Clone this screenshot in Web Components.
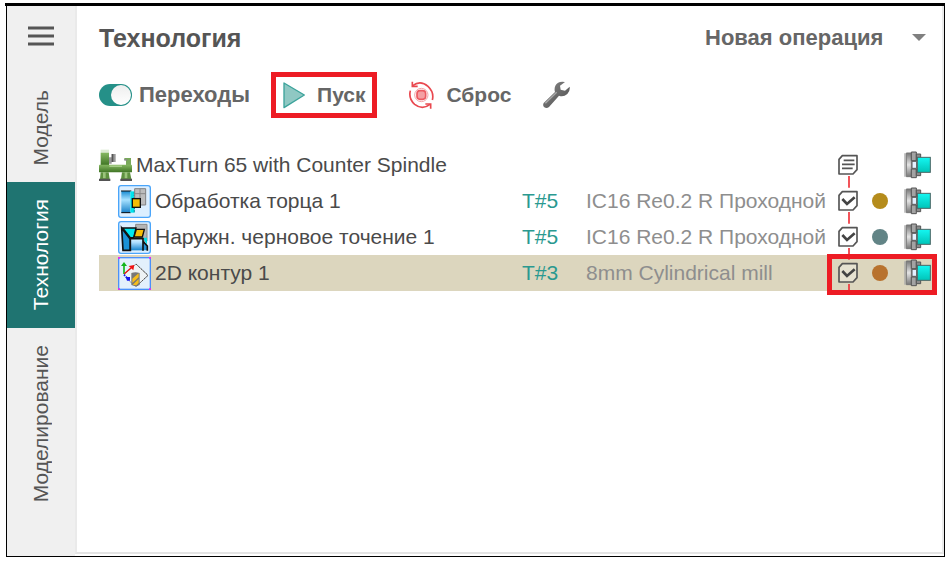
<!DOCTYPE html>
<html lang="ru">
<head>
<meta charset="utf-8">
<title>Технология</title>
<style>
  body {
    margin: 0;
    background: #fff;
    color: #4a4a4a;
    font-family: "Liberation Sans", Arial, sans-serif;
    font-size: 21px;
  }
</style>
</head>
<body>
<cam-app>
  <cam-sidebar slot="sidebar">
    <cam-tab>Модель</cam-tab>
    <cam-tab active>Технология</cam-tab>
    <cam-tab>Моделирование</cam-tab>
  </cam-sidebar>
  <cam-header>Технология</cam-header>
  <cam-toolbar></cam-toolbar>
  <cam-operations></cam-operations>
</cam-app>

<script>
const ICONS = {
  machine: `
    <svg width="33" height="36" viewBox="28 21 99 108" aria-hidden="true">
      <defs><linearGradient id="g" x1="0" y1="0" x2="0" y2="1">
        <stop offset="0" stop-color="#86b862"/><stop offset="1" stop-color="#3f7424"/>
      </linearGradient></defs>
      <rect x="33" y="29" width="25" height="9" fill="#dcebd2"/>
      <rect x="33" y="38" width="25" height="38" fill="url(#g)"/>
      <path d="M58 52h8V42h12v24H66v5h-8z" fill="#999"/>
      <path d="M66 42h5v24h-5z" fill="#555"/>
      <path d="M104 54h20v25h-15V60h-5z" fill="#79a95a"/>
      <path d="M104 57h8v5h-8z" fill="#888"/>
      <rect x="28" y="74" width="99" height="23" rx="2" fill="url(#g)"/>
      <path d="M59 76h38v5H59z" fill="#a5cc86"/>
      <path d="M33 97h24l3 20H31zM97 97h24l4 20H94z" fill="#5e913f"/>
      <path d="M40 97h8v18h-8zM105 97h8v18h-8z" fill="#9bc47c"/>
      <path d="M28 116h34v7H28zM92 116h35v7H92z" fill="#545454"/>
    </svg>`,
  facing: `
    <svg width="33" height="33" viewBox="83 133 99 99" aria-hidden="true">
      <defs><linearGradient id="f" x1="0" y1="0" x2="0" y2="1">
        <stop offset="0" stop-color="#168ad2"/><stop offset=".4" stop-color="#a8e2ff"/><stop offset="1" stop-color="#147ec8"/>
      </linearGradient></defs>
      <rect x="85" y="135" width="95" height="95" rx="7" fill="#dcefff" stroke="#4aa5fa" stroke-width="4"/>
      <rect x="93" y="151" width="27" height="66" fill="url(#f)"/>
      <path d="M92 151h31M93 216h28" stroke="#111" stroke-width="3"/>
      <path d="M120 152h12v64h-12z" fill="#00e5ee"/>
      <path d="M132 155v18M132 202v15" stroke="#008e98" stroke-width="4" stroke-dasharray="4 3"/>
      <path d="M133 144h33v49h-16v-20h-17z" fill="#bdbdbd" stroke="#828282" stroke-width="3"/>
      <path d="M149 144v15h17M133 159h16v14" fill="none" stroke="#888" stroke-width="3"/>
      <rect x="126" y="174" width="24" height="26" fill="#f4bd06" stroke="#111" stroke-width="4"/>
    </svg>`,
  roughing: `
    <svg width="33" height="33" viewBox="83 243 99 99" aria-hidden="true">
      <defs><linearGradient id="r" x1="0" y1="0" x2="0" y2="1">
        <stop offset="0" stop-color="#d8f2ff"/><stop offset=".3" stop-color="#aedfff"/><stop offset="1" stop-color="#1784cd"/>
      </linearGradient></defs>
      <rect x="85" y="245" width="95" height="95" rx="7" fill="#dcefff" stroke="#4aa5fa" stroke-width="4"/>
      <path d="M136 253h34v50h-16v-10h-18z" fill="#b5b5b5" stroke="#898989" stroke-width="3"/>
      <path d="M94 264l26 34v33H98z" fill="#1b92d6" stroke="#111" stroke-width="5"/>
      <path d="M97 264h40l-7 29h-10z" fill="#00e8f0" stroke="#111" stroke-width="4"/>
      <path d="M157 293h13v21z" fill="#00dce6"/>
      <path d="M120 297h38v34h-38z" fill="url(#r)"/>
      <path d="M158 304l13 14v13h-13z" fill="#2593d8"/>
      <path d="M120 332v-36h38v36M158 304l13 14v14" fill="none" stroke="#111" stroke-width="5"/>
      <path d="M138 268h24l-6 23h-25z" fill="#f4bd06" stroke="#111" stroke-width="4"/>
    </svg>`,
  contour: `
    <svg width="33" height="33" viewBox="83 351 99 99" aria-hidden="true">
      <rect x="85" y="353" width="95" height="95" fill="#e3f0fc" stroke="#4a90fa" stroke-width="4"/>
      <path d="M83 351h6v5h-6zM176 351h6v5h-6zM83 445h6v5h-6zM176 445h6v5h-6z" fill="#e52af0"/>
      <path d="M101 403l36-31 36 34-36 34-20-17" fill="#eef2f4" stroke="#999" stroke-width="3"/>
      <path d="M137 372l36 34-36 34" fill="none" stroke="#555" stroke-width="3" stroke-dasharray="6 4"/>
      <path d="M101 402v-28" stroke="#12b51c" stroke-width="5"/>
      <path d="M92 378l9-12 9 12z" fill="#12b51c"/>
      <path d="M102 401l20-17" stroke="#f01010" stroke-width="4"/>
      <path d="M115 378l17-3-3 16z" fill="#f01010"/>
      <path d="M101 404l16 17" stroke="#1515ee" stroke-width="5" stroke-dasharray="5 3"/>
      <path d="M106 411h13v11h-9z" fill="#1515ee"/>
      <path d="M123 399q12-5 25 0v36q-12 7-25 0z" fill="#777"/>
      <path d="M126 416l19-16v12l-19 17zM127 434l18-17v12l-7 7z" fill="#f5bd1b"/>
    </svg>`,
  chuck: `
    <svg width="27" height="36" viewBox="252 21 81 108" aria-hidden="true">
      <defs>
        <linearGradient id="m" x1="0" y1="0" x2="0" y2="1">
          <stop offset="0" stop-color="#777"/><stop offset=".5" stop-color="#e4e4e4"/><stop offset="1" stop-color="#777"/>
        </linearGradient>
        <linearGradient id="c" x1="0" y1="0" x2="0" y2="1">
          <stop offset="0" stop-color="#14f7f2"/><stop offset="1" stop-color="#00c4b8"/>
        </linearGradient>
      </defs>
      <path d="M255 40v70" stroke="#aaa" stroke-width="4"/>
      <path d="M259 39h15v71h-15z" fill="url(#m)" stroke="#777" stroke-width="3"/>
      <path d="M274 36h15v26h-15zM274 87h15v26h-15z" fill="#a3a3a3" stroke="#555" stroke-width="3"/>
      <path d="M276 64h14v21h-14z" fill="#e4f1ff" stroke="#555" stroke-width="3"/>
      <path d="M289 42h13v20h-13zM289 87h13v20h-13z" fill="#8c8c8c" stroke="#555" stroke-width="3"/>
      <rect x="292" y="52" width="39" height="45" fill="url(#c)" stroke="#4b6665" stroke-width="3"/>
    </svg>`,
  play: `
    <svg width="22" height="28" viewBox="582 34 66 84" aria-hidden="true">
      <path d="M585 40l61 36-61 38z" fill="#8fc8c3" stroke="#3ca39b" stroke-width="4" stroke-linejoin="round"/>
    </svg>`,
  reset: `
    <svg width="25" height="28" viewBox="61 34 75 84" aria-hidden="true">
      <rect x="85" y="63" width="26" height="26" rx="9" fill="#f4a0a3" stroke="#ec5a60" stroke-width="5"/>
      <circle cx="98" cy="76" r="20" fill="none" stroke="#f3a5a8" stroke-width="3"/>
      <g fill="none" stroke="#e9484f" stroke-width="5">
        <path d="M72 48Q95 30 118 50Q137 68 131 91"/>
        <path d="M124 104Q101 122 78 104Q59 87 65 63"/>
        <path d="M71 36v14h16M126 117v-14h-16"/>
      </g>
    </svg>`,
  wrench: `
    <svg width="27" height="28" viewBox="459 34 81 84" aria-hidden="true">
      <defs><linearGradient id="w" x1="0" y1="0" x2="1" y2="1">
        <stop offset="0" stop-color="#8a8a8a"/><stop offset="1" stop-color="#4c4c4c"/>
      </linearGradient></defs>
      <path d="M525 37q-21-4-29 11q-4 9-1 19l-34 33q-4 8 2 13q7 5 14-1l30-34q13 5 25-5q9-9 7-22l-14 12l-13-3l-2-12z" fill="url(#w)"/>
      <path d="M466 101l34-33" stroke="#aaa" stroke-width="4"/>
    </svg>`,
};

class CamApp extends HTMLElement {
  constructor() {
    super();
    this.attachShadow({ mode: 'open' }).innerHTML = `
      <style>
        :host {
          box-sizing: border-box;
          display: flex;
          flex-direction: column;
          min-height: 100vh;
          padding: 3px 7px 6px 5px;
        }
        .bar {
          height: 3px;
          background: #000;
        }
        .window {
          flex: 1;
          display: flex;
          margin-left: 1px;
          border: 1px solid #000;
          border-top: 0;
        }
        main {
          flex: 1;
          min-width: 0;
          box-sizing: border-box;
          margin-bottom: 2px;
          padding: 10px 6px 20px 22px;
          border: solid #eaeaea;
          border-width: 0 2px;
          border-bottom: 2px solid #e4e4e4;
        }
      </style>
      <div class="bar"></div>
      <div class="window">
        <slot name="sidebar"></slot>
        <main><slot></slot></main>
      </div>
    `;
  }
}

class CamSidebar extends HTMLElement {
  constructor() {
    super();
    this.attachShadow({ mode: 'open' }).innerHTML = `
      <style>
        :host {
          display: flex;
          flex-direction: column;
          width: 68px;
          background: #f0f0f0;
        }
        .menu {
          display: flex;
          justify-content: center;
          height: 67px;
          padding: 20px 0;
          border: 0;
          background: none;
        }
      </style>
      <button class="menu" aria-label="Меню">
        <svg width="28" height="20" viewBox="0 0 28 20">
          <path d="M1 2h26M1 10h26M1 18h26" stroke="#555" stroke-width="3"/>
        </svg>
      </button>
      <slot></slot>
    `;
  }
}

class CamTab extends HTMLElement {
  constructor() {
    super();
    this.attachShadow({ mode: 'open' }).innerHTML = `
      <style>
        :host { display: block; }
        button {
          display: flex;
          align-items: center;
          justify-content: center;
          width: 100%;
          padding: 17px 0;
          border: 0;
          background: none;
          color: #555;
          font: inherit;
        }
        :host([active]) button {
          background: #1f7471;
          color: #fff;
        }
        /* text runs from bottom to top */
        span {
          writing-mode: vertical-rl;
          transform: rotate(180deg);
        }
      </style>
      <button><span><slot></slot></span></button>
    `;
  }
}

class CamHeader extends HTMLElement {
  constructor() {
    super();
    this.attachShadow({ mode: 'open' }).innerHTML = `
      <style>
        :host {
          display: flex;
          align-items: center;
          justify-content: space-between;
          height: 44px;
        }
        h1 {
          margin: 0;
          color: #555;
          font-size: 25px;
          line-height: 40px;
        }
        .select {
          position: relative;
          display: flex;
          align-items: center;
        }
        select {
          appearance: none;
          padding: 0 52px 0 0;
          border: 0;
          background: none;
          color: #666;
          font: bold 22px "Liberation Sans", Arial, sans-serif;
          line-height: 40px;
        }
        svg {
          position: absolute;
          right: 10px;
          pointer-events: none;
        }
      </style>
      <h1><slot></slot></h1>
      <div class="select">
        <select aria-label="Новая операция"><option>Новая операция</option></select>
        <svg width="14" height="8" viewBox="0 0 14 8"><path d="M0 0h14L7 7z" fill="#808080"/></svg>
      </div>
    `;
  }
}

class CamToolbar extends HTMLElement {
  constructor() {
    super();
    this.attachShadow({ mode: 'open' }).innerHTML = `
      <style>
        :host {
          display: flex;
          align-items: center;
          gap: 21px;
          height: 46px;
          margin-top: 12px;
          color: #666;
          font-weight: bold;
        }
        label, button {
          display: flex;
          align-items: center;
          box-sizing: border-box;
          height: 46px;
        }
        label {
          gap: 7px;
          font-size: 22px;
        }
        button {
          gap: 12px;
          padding: 0;
          border: 0;
          background: none;
          color: inherit;
          font: inherit;
        }
        .run {
          padding: 0 7px;
          border: 5px solid #ed1c24;
        }
        .reset { padding: 0 11px; }
        input {
          appearance: none;
          display: flex;
          justify-content: flex-end;
          box-sizing: border-box;
          width: 33px;
          height: 22px;
          margin: 0;
          padding: 1px;
          border-radius: 11px;
          background: #259088;
        }
        input::before {
          content: "";
          width: 20px;
          height: 20px;
          border-radius: 50%;
          background: linear-gradient(#eee, #fff);
        }
        input:not(:checked) {
          justify-content: flex-start;
          background: #aaa;
        }
      </style>
      <label><input type="checkbox" role="switch" checked>Переходы</label>
      <button class="run">${ICONS.play}Пуск</button>
      <button class="reset">${ICONS.reset}Сброс</button>
      <button aria-label="Настройки">${ICONS.wrench}</button>
    `;
  }
}

// Status cell of a row: sheet or tick box, with the red link to its neighbours
class CamStatus extends HTMLElement {
  constructor() {
    super();
    this.attachShadow({ mode: 'open' });
  }

  connectedCallback() {
    const root = this.hasAttribute('root');
    const mark = root
      ? '<path d="M17 40h32M12 52h38M12 64h32" stroke="#555" stroke-width="5"/>'
      : '<path class="tick" d="M13 48l14 15 23-20" fill="none" stroke="#444" stroke-width="8"/>';
    this.shadowRoot.innerHTML = `
      <style>
        :host {
          display: block;
          position: relative;
          width: 20px;
          height: 36px;
        }
        svg { display: block; }
        input {
          position: absolute;
          inset: 8px 0;
          width: 20px;
          height: 20px;
          margin: 0;
          opacity: 0;
        }
        input:not(:checked) + svg .tick { display: none; }
      </style>
      ${root ? '' : `<input type="checkbox" checked aria-label="${this.getAttribute('label')}">`}
      <svg width="20" height="36" viewBox="0 0 60 108">
        <path d="M33 87v21${root ? '' : 'M33 0v14'}" stroke="#f0333a" stroke-width="5"/>
        <path d="M13 26H57V68L45 81H3V37Z" fill="#fff" fill-opacity=".3" stroke="#555" stroke-width="5" stroke-linejoin="round"/>
        ${mark}
      </svg>
    `;
  }
}

class CamOperations extends HTMLElement {
  constructor() {
    super();
    this.attachShadow({ mode: 'open' });
    this._items = [
      { icon: 'facing', name: 'Обработка торца 1', tool: 'T#5', info: 'IC16 Re0.2 R Проходной', color: '#b58c1c' },
      { icon: 'roughing', name: 'Наружн. черновое точение 1', tool: 'T#5', info: 'IC16 Re0.2 R Проходной', color: '#628486' },
      { icon: 'contour', name: '2D контур 1', tool: 'T#3', info: '8mm Cylindrical mill', color: '#b8722e', selected: true },
    ];
  }

  connectedCallback() {
    this.render();
  }

  row(item) {
    return `
      <tr class="${item.selected ? 'selected' : ''}">
        <td><div class="name child">${ICONS[item.icon]}${item.name}</div></td>
        <td class="tool">${item.tool}</td>
        <td class="info">${item.info}</td>
        <td><cam-status label="${item.name}"></cam-status></td>
        <td><div class="dot" style="background: ${item.color}"></div></td>
        <td class="last">${ICONS.chuck}${item.selected ? '<div class="frame"></div>' : ''}</td>
      </tr>`;
  }

  render() {
    this.shadowRoot.innerHTML = `
      <style>
        :host {
          display: block;
          margin-top: 29px;
        }
        table {
          width: 100%;
          table-layout: fixed;
          border-collapse: collapse;
        }
        td {
          height: 36px;
          padding: 0;
          white-space: nowrap;
        }
        svg {
          display: block;
          flex: none;
        }
        .name {
          display: flex;
          align-items: center;
          gap: 4px;
        }
        .child { padding-left: 19px; }
        .tool { color: #2a9990; }
        .info { color: #8e8e8e; }
        .dot {
          width: 16px;
          height: 16px;
          border-radius: 50%;
        }
        .selected { background: #dcd6be; }
        .last { position: relative; }
        .frame {
          position: absolute;
          inset: -1px -1px -4px auto;
          box-sizing: border-box;
          width: 110px;
          border: 5px solid #ed1c24;
          pointer-events: none;
        }
      </style>
      <table>
        <colgroup>
          <col><col style="width: 64px"><col style="width: 252px">
          <col style="width: 34px"><col style="width: 32px"><col style="width: 32px">
        </colgroup>
        <tr>
          <td colspan="3"><div class="name">${ICONS.machine}MaxTurn 65 with Counter Spindle</div></td>
          <td><cam-status root></cam-status></td>
          <td></td>
          <td>${ICONS.chuck}</td>
        </tr>
        ${this._items.map((item) => this.row(item)).join('')}
      </table>
    `;
  }
}

customElements.define('cam-app', CamApp);
customElements.define('cam-sidebar', CamSidebar);
customElements.define('cam-tab', CamTab);
customElements.define('cam-header', CamHeader);
customElements.define('cam-toolbar', CamToolbar);
customElements.define('cam-status', CamStatus);
customElements.define('cam-operations', CamOperations);
</script>
</body>
</html>
